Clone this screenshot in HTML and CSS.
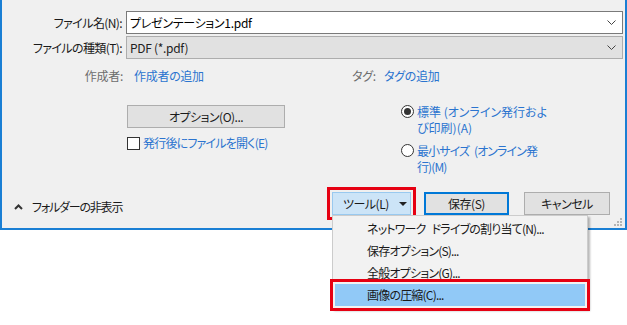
FILE: index.html
```html
<!DOCTYPE html>
<html lang="ja">
<head>
<meta charset="utf-8">
<title>PDF として発行</title>
<link rel="stylesheet" href="styles.css">
</head>
<body>
<div class="dialog">
  <div class="form">
    <label class="label">ファイル名(N):</label>
    <div class="field field-input"><span class="field-text">プレゼンテーション1.pdf</span>
      <svg class="chev" width="9" height="5" viewBox="0 0 9 5"><path d="M0.5 0.5 L4.5 4.5 L8.5 0.5" fill="none" stroke="#444" stroke-width="1"/></svg>
    </div>
    <label class="label">ファイルの種類(T):</label>
    <div class="field field-select"><span class="field-text">PDF (*.pdf)</span>
      <svg class="chev" width="9" height="5" viewBox="0 0 9 5"><path d="M0.5 0.5 L4.5 4.5 L8.5 0.5" fill="none" stroke="#444" stroke-width="1"/></svg>
    </div>
  </div>

  <div class="meta">
    <span class="meta-label">作成者:</span>
    <span class="meta-value author">作成者の追加</span>
    <span class="meta-tag-label">タグ:</span>
    <span class="meta-value">タグの追加</span>
  </div>

  <div class="options">
    <div class="opt-left">
      <button class="btn btn-options">オプション(O)...</button>
      <div class="check-row">
        <span class="checkbox"></span>
        <span class="link-text check-text">発行後にファイルを開く(E)</span>
      </div>
    </div>
    <div class="opt-right">
      <div class="radio-row">
        <span class="radio checked"></span>
        <span class="link-text radio-text">標準 (オンライン発行およ<br>び印刷)(A)</span>
      </div>
      <div class="radio-row second">
        <span class="radio"></span>
        <span class="link-text radio-text tight">最小サイズ (オンライン発<br>行)(M)</span>
      </div>
    </div>
  </div>

  <div class="footer">
    <div class="folder-toggle">
      <svg width="9" height="6" viewBox="0 0 9 6"><path d="M1 5 L4.5 1.5 L8 5" fill="none" stroke="#333" stroke-width="2"/></svg>
      <span>フォルダーの非表示</span>
    </div>
    <div class="tool-wrap">
      <button class="btn btn-tool"><span>ツール(L)</span><span class="tri"></span></button>
      <div class="menu">
        <div class="menu-item">ネットワーク ドライブの割り当て(N)...</div>
        <div class="menu-item">保存オプション(S)...</div>
        <div class="menu-item">全般オプション(G)...</div>
        <div class="menu-item active">画像の圧縮(C)...</div>
      </div>
    </div>
    <button class="btn btn-save">保存(S)</button>
    <button class="btn btn-cancel">キャンセル</button>
  </div>

  <svg class="grip" width="8" height="8" viewBox="0 0 8 8">
    <rect x="6" y="0" width="2" height="2" fill="#b4b4b4"/>
    <rect x="3" y="3" width="2" height="2" fill="#b4b4b4"/>
    <rect x="6" y="3" width="2" height="2" fill="#b4b4b4"/>
    <rect x="0" y="6" width="2" height="2" fill="#b4b4b4"/>
    <rect x="3" y="6" width="2" height="2" fill="#b4b4b4"/>
    <rect x="6" y="6" width="2" height="2" fill="#b4b4b4"/>
  </svg>
</div>
</body>
</html>
```

FILE: styles.css
```css
* { box-sizing: border-box; }

html, body {
  margin: 0;
  padding: 0;
  background: #ffffff;
}

body {
  min-height: 325px;
  font-family: "Noto Sans CJK JP", "Noto Sans", sans-serif;
  font-size: 12px;
  line-height: 16px;
  color: #1a1a1a;
  font-feature-settings: "palt";
  letter-spacing: -0.3px;
}

.dialog {
  position: relative;
  width: 627px;
  height: 230px;
  background: #f0f0f0;
  border-left: 2px solid #1a7fd4;
  border-right: 2px solid #1a7fd4;
  border-bottom: 2px solid #1a7fd4;
  padding-top: 11px;
}

.form {
  display: grid;
  grid-template-columns: 120px 1fr;
  column-gap: 4px;
  row-gap: 2px;
  padding-right: 2px;
}

.label {
  align-self: center;
  text-align: right;
  white-space: nowrap;
  letter-spacing: -0.6px;
}

.field {
  height: 23px;
  display: flex;
  align-items: center;
  padding: 0 6px 0 3px;
  white-space: nowrap;
}

.field-input {
  background: #ffffff;
  border: 1px solid #7a7a7a;
  color: #000;
}

.field-select {
  background: #e1e1e1;
  border: 1px solid #adadad;
  color: #222;
}

.chev {
  margin-left: auto;
  display: block;
}

.meta {
  display: flex;
  margin-top: 9px;
  white-space: nowrap;
}

.meta-label {
  width: 121px;
  text-align: right;
  color: #6d6d6d;
}

.meta-value {
  color: #2b74cf;
}

.author {
  margin-left: 11px;
  width: 218px;
}

.meta-tag-label {
  color: #6d6d6d;
  width: 32px;
}

.options {
  display: flex;
  margin-top: 20px;
  padding-left: 125px;
}

.opt-left {
  width: 158px;
  display: flex;
  flex-direction: column;
}

.btn {
  font-family: inherit;
  font-size: 12px;
  line-height: 16px;
  color: #1a1a1a;
  height: 23px;
  background: #e1e1e1;
  border: 1px solid #adadad;
  padding: 0;
  margin: 0;
  font-feature-settings: "palt";
  letter-spacing: -0.5px;
}

.btn-options {
  margin-top: 1px;
  width: 158px;
}

.check-row {
  display: flex;
  align-items: center;
  gap: 3px;
  margin-top: 7px;
  height: 16px;
  white-space: nowrap;
}

.check-text {
  letter-spacing: -0.8px;
}

.checkbox {
  width: 13px;
  height: 13px;
  border: 1px solid #333;
  background: #fff;
  flex: none;
}

.link-text {
  color: #2b74cf;
}

.opt-right {
  margin-left: 116px;
  display: flex;
  flex-direction: column;
}

.radio-row {
  display: flex;
  align-items: flex-start;
  gap: 3px;
}

.radio-row.second {
  margin-top: 7px;
}

.radio {
  width: 13px;
  height: 13px;
  margin-top: 1px;
  border: 1px solid #333;
  border-radius: 50%;
  background: #fff;
  flex: none;
  display: flex;
  align-items: center;
  justify-content: center;
}

.radio.checked::after {
  content: "";
  width: 7px;
  height: 7px;
  border-radius: 50%;
  background: #333;
}

.radio-text {
  white-space: nowrap;
  letter-spacing: 0;
}

.radio-text.tight {
  letter-spacing: -0.9px;
  word-spacing: 3px;
}

.footer {
  display: flex;
  align-items: flex-start;
  margin-top: 17px;
  padding-right: 15px;
}

.folder-toggle {
  display: flex;
  align-items: center;
  gap: 9px;
  margin-top: 7px;
  padding-left: 12px;
  white-space: nowrap;
  letter-spacing: -1.2px;
}

.folder-toggle svg {
  display: block;
}

.tool-wrap {
  position: relative;
  margin-left: auto;
}

.btn-tool {
  width: 79px;
  background: #cce4f7;
  border: 1px solid #99c9ef;
  display: flex;
  align-items: center;
  padding: 0 3px 0 10px;
  outline: 3px solid #e60012;
  outline-offset: 2px;
}

.tri {
  margin-left: auto;
  width: 0;
  height: 0;
  border-left: 4px solid transparent;
  border-right: 4px solid transparent;
  border-top: 4px solid #222;
}

.btn-save {
  width: 85px;
  margin-left: 13px;
  border: 2px solid #0078d7;
}

.btn-cancel {
  width: 86px;
  margin-left: 15px;
}

.menu {
  position: absolute;
  left: 0;
  top: 100%;
  width: 256px;
  background: #f2f2f2;
  border: 1px solid #cccccc;
  box-shadow: 2px 2px 2px rgba(0, 0, 0, 0.28);
  padding: 2px 0 2px;
  z-index: 5;
}

.menu-item {
  height: 22px;
  line-height: 22px;
  margin: 0 2px;
  padding-left: 32px;
  white-space: nowrap;
  color: #1a1a1a;
  letter-spacing: -0.8px;
  word-spacing: 4px;
}

.menu-item.active {
  background: #91c9f7;
  outline: 3px solid #e60012;
  outline-offset: 2px;
}

.grip {
  position: absolute;
  right: 3px;
  bottom: 2px;
  display: block;
}
```
